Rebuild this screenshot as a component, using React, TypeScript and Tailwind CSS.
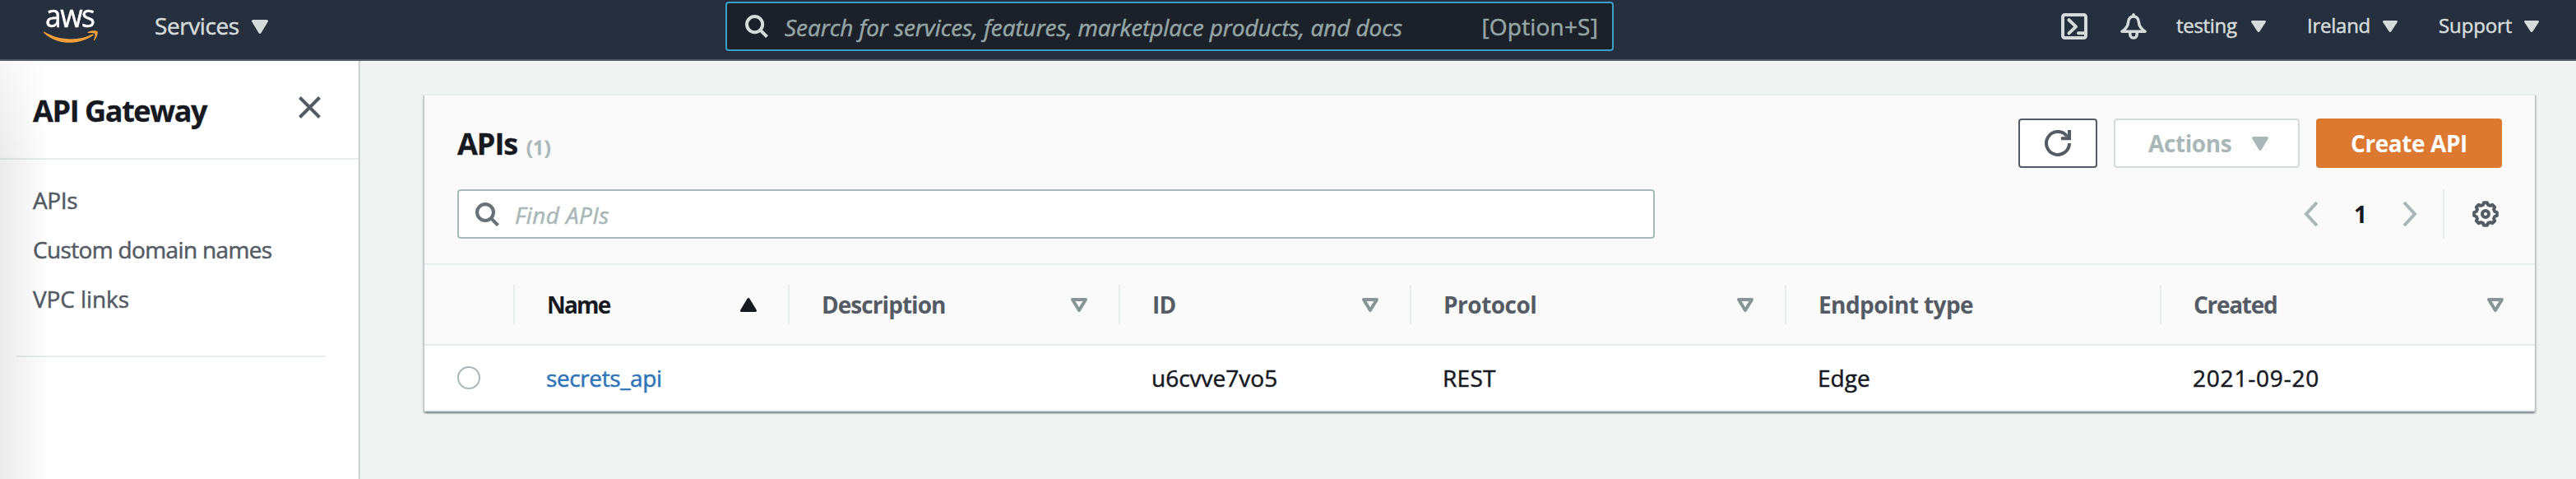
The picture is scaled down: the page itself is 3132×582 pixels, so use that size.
import type { ReactNode } from "react";

function Caret({ className = "" }: { className?: string }) {
  return (
    <svg viewBox="0 0 20 17" preserveAspectRatio="none" className={className} fill="currentColor">
      <path d="M1.6 0h16.8c1.3 0 2 1.4 1.3 2.5l-8.2 13.6c-.7 1.2-2.3 1.2-3 0L.3 2.5C-.4 1.4.3 0 1.6 0z" />
    </svg>
  );
}

function SearchIcon({ className = "" }: { className?: string }) {
  return (
    <svg viewBox="0 0 28 28" className={className} fill="none" stroke="currentColor" strokeWidth="4">
      <circle cx="11.6" cy="11.6" r="9.6" />
      <path d="M18 18.2 26.5 26.7" />
    </svg>
  );
}

function AwsLogo() {
  return (
    <div className="flex h-[64px] w-[66px] flex-col items-start">
      <span className="ml-[2px] h-[37px] origin-left scale-x-[0.93] text-[38px] leading-[36px] tracking-[-1.6px] text-white [-webkit-text-stroke:0.5px_white]">aws</span>
      <svg viewBox="0 0 66 16" className="h-4 w-[66px] shrink-0" fill="#f19f3b">
        <path d="M.5 1.5C18 12 42 13.5 59.5 4.6c1.2-.5 1.8.6.8 1.5C43 18.5 16 18 .3 3 -.3 2.2 0 1.2.5 1.5z" />
        <path d="M53.5 2.2C57 -.3 64.5-.2 65.5 1c1 1.5-.5 8-3.7 11-.6.5-1.1.2-.8-.5 1-2.5 2-6.5 1.3-7.5-.7-1-5-.6-8.3-.9-.7-.1-.9-.5-.5-.9z" />
      </svg>
    </div>
  );
}

function CloudShellIcon() {
  return (
    <svg viewBox="0 0 32 32" className="size-8" fill="none" stroke="currentColor" strokeWidth="4">
      <rect x="2" y="2" width="28" height="28" rx="2.5" />
      <path d="M9.5 8.2 18 16.4 9.5 24.4" strokeLinecap="round" strokeLinejoin="round" />
      <path d="M21 24.2h8" strokeLinecap="round" />
    </svg>
  );
}

function BellIcon() {
  return (
    <svg viewBox="0 0 32 32" className="size-8" fill="none" stroke="currentColor" strokeWidth="3.6" strokeLinejoin="round" strokeLinecap="round">
      <path d="M2 22.2C7.5 18.5 9.3 15.5 9.6 11c.3-4.5 3-7 6.4-7s6.1 2.5 6.4 7c.3 4.5 2.1 7.5 7.6 11.2z" />
      <path d="M16 1.8v2M11.8 23v2.4c0 6.2 8.4 6.2 8.4 0V23" />
    </svg>
  );
}

function RefreshIcon() {
  return (
    <svg viewBox="0 0 32 32" className="size-8" fill="none" stroke="currentColor" strokeWidth="4">
      <path d="M30 16A14 14 0 1 1 26.5 6.7" />
      <path d="M30 0v10.2H20" />
      <path d="M24 8.5h4.5V5z" fill="currentColor" stroke="none" />
    </svg>
  );
}

const gearPath =
  Array.from({ length: 8 }, (_, k) =>
    [
      [-8, 14],
      [8, 14],
      [15, 11.6],
      [30, 11.6],
    ]
      .map(([offset, r]) => {
        const a = ((k * 45 + offset) * Math.PI) / 180;
        return `${(16 + r * Math.sin(a)).toFixed(2)} ${(16 - r * Math.cos(a)).toFixed(2)}`;
      })
      .join("L"),
  ).reduce((d, part) => (d ? `${d}L${part}` : `M${part}`), "") + "Z";

function GearIcon() {
  return (
    <svg viewBox="0 0 32 32" className="size-8" fill="none" stroke="currentColor" strokeWidth="4" strokeLinejoin="round">
      <path d={gearPath} />
      <circle cx="16" cy="16" r="4" />
    </svg>
  );
}

function NavMenu({ label, className }: { label: string; className: string }) {
  return (
    <div className="flex items-center">
      <span className={`pb-[2px] text-[24px] leading-8 whitespace-nowrap ${className}`}>{label}</span>
      <Caret className="h-[14px] w-[18px]" />
    </div>
  );
}

function TopNav() {
  return (
    <header className="flex h-[74px] items-start border-b-2 border-[#545b64] bg-[#262f3e] text-[#d5dbdb]">
      <div className="flex h-16 w-[882px] items-center pl-[53px]">
        <AwsLogo />
        <span className="ml-[69px] w-[118px] pb-[2px] text-[28px] leading-8 tracking-[-0.43px] [-webkit-text-stroke:0.5px_currentColor]">Services</span>
        <Caret className="h-[17px] w-5" />
      </div>
      <div className="mt-[2px] flex h-[60px] w-[1080px] items-center rounded-[4px] border-2 border-[#3d9ec6] bg-[#1c2028] pr-[17px] pl-[22px] text-[28px] leading-8 text-[#95a5a6]">
        <SearchIcon className="size-7 text-[#d5dbdb]" />
        <span className="ml-[20px] pt-[2px] whitespace-nowrap tracking-[-0.08px] italic [-webkit-text-stroke:0.5px_currentColor]">
          Search for services, features, marketplace products, and docs
        </span>
        <span className="ml-auto tracking-[0.18px] [-webkit-text-stroke:0.5px_currentColor]">[Option+S]</span>
      </div>
      <div className="ml-auto flex h-16 items-center pr-[45px] [-webkit-text-stroke:0.5px_currentColor]">
        <CloudShellIcon />
        <div className="ml-[40px] mr-[36px]">
          <BellIcon />
        </div>
        <NavMenu label="testing" className="w-[91px] tracking-[-0.3px]" />
        <div className="w-[50px]" />
        <NavMenu label="Ireland" className="w-[92px] tracking-[-0.25px]" />
        <div className="w-[50px]" />
        <NavMenu label="Support" className="w-[104px] tracking-[-0.12px]" />
      </div>
    </header>
  );
}

function Sidebar() {
  return (
    <aside className="relative z-10 w-[436px] shrink-0 bg-white shadow-[0_0_2px_1px_rgba(0,28,36,0.3)] [clip-path:inset(0_-4px_0_0)]">
      <div className="flex h-[120px] items-center justify-between border-b-2 border-[#eaeded] pr-[46px] pl-[40px]">
        <h2 className="pt-[4px] text-[36px] leading-[44px] font-bold tracking-[-1.4px] text-[#16191f] [-webkit-text-stroke:0.3px_currentColor]">API Gateway</h2>
        <svg viewBox="0 0 27 27" className="mb-[6px] size-[27px] text-[#545b64]" fill="none" stroke="currentColor" strokeWidth="4">
          <path d="M1.5 1.5l24 24M25.5 1.5l-24 24" />
        </svg>
      </div>
      <nav className="flex flex-col pt-[19px] pl-[40px] text-[28px] leading-[60px] text-[#545b64] [-webkit-text-stroke:0.5px_currentColor]">
        <a className="tracking-[-0.37px]">APIs</a>
        <a className="tracking-[-0.65px]">Custom domain names</a>
        <a className="tracking-[-0.1px]">VPC links</a>
      </nav>
      <div className="mt-[39px] ml-5 h-[2px] w-[376px] bg-[#eaeded]" />
      <div className="pointer-events-none absolute inset-y-0 left-0 w-[60px] bg-linear-to-r from-black/8 to-transparent [mask-image:linear-gradient(to_bottom,rgba(0,0,0,0.4),black_120px)]" />
    </aside>
  );
}

type Sort = "asc" | "none" | null;

function HeaderCell({ children, sort, last, className = "" }: { children: ReactNode; sort: Sort; last?: boolean; className?: string }) {
  return (
    <div className={`flex h-12 items-center justify-between border-[#eaeded] pr-[38px] pl-[39px] ${last ? "" : "border-r-2"}`}>
      <span className={`pb-px whitespace-nowrap ${className}`}>{children}</span>
      {sort === "asc" && <Caret className="h-[17px] w-5 rotate-180 text-[#16191f]" />}
      {sort === "none" && (
        <svg viewBox="0 0 20 17" className="h-[17px] w-5 text-[#879596]" fill="none" stroke="currentColor" strokeWidth="4" strokeLinejoin="round">
          <path d="M2 2h16l-8 13z" />
        </svg>
      )}
    </div>
  );
}

const columns = "grid grid-cols-[110px_334px_402px_354px_456px_456px_454px] items-center";

function ApiPanel() {
  return (
    <section className="mt-[40px] ml-[80px] h-[386px] w-[2566px] border-t-2 border-[#eaeded] bg-[#fafafa] shadow-[0_2px_2px_0_rgba(0,28,36,0.35),2px_2px_2px_0_rgba(0,28,36,0.15),-2px_2px_2px_0_rgba(0,28,36,0.15)]">
      <div className="flex h-[206px] flex-col border-b-2 border-[#eaeded] pt-[28px] pr-[40px] pl-[40px]">
        <div className="flex h-[60px] items-center">
          <h1 className="w-[84px] pt-[2px] text-[36px] leading-[44px] font-bold tracking-[-1px] text-[#16191f] [-webkit-text-stroke:0.3px_currentColor]">APIs</h1>
          <span className="pt-[9px] text-[24px] leading-8 font-semibold tracking-[0.35px] text-[#aab7b8] [-webkit-text-stroke:0.8px_currentColor]">(1)</span>
          <button className="ml-auto flex h-[60px] w-24 items-center justify-center rounded-[4px] border-2 border-[#545b64] bg-white text-[#545b64]">
            <RefreshIcon />
          </button>
          <button className="ml-5 flex h-[60px] w-[226px] items-center justify-between rounded-[4px] border-2 border-[#d5dbdb] bg-white pr-[36px] pl-[40px] text-[28px] leading-8 font-bold tracking-[-0.4px] text-[#aab7b8]">
            <span className="pb-px">Actions</span>
            <Caret className="h-[17px] w-5" />
          </button>
          <button className="ml-5 h-[60px] w-[226px] rounded-[4px] bg-[#dd7831] pb-px text-[28px] leading-8 font-bold tracking-[-0.42px] text-white">
            Create API
          </button>
        </div>
        <div className="mt-[26px] flex h-[60px] items-center">
          <div className="flex h-[60px] w-[1456px] items-center rounded-[4px] border-2 border-[#aab7b8] bg-white pl-5 text-[28px] leading-8 text-[#aab7b8]">
            <SearchIcon className="size-[29px] text-[#687078]" />
            <span className="ml-[19px] pt-[2px] tracking-[0.375px] italic [-webkit-text-stroke:0.5px_currentColor]">Find APIs</span>
          </div>
          <div className="ml-auto flex items-center text-[#aab7b8]">
            <svg viewBox="0 0 18 30" className="h-[30px] w-[18px]" fill="none" stroke="currentColor" strokeWidth="4">
              <path d="M16 1 3 15l13 14" />
            </svg>
            <span className="ml-[43px] w-[59px] pb-px text-[28px] leading-8 font-bold text-[#16191f]">1</span>
            <svg viewBox="0 0 18 30" className="h-[30px] w-[18px]" fill="none" stroke="currentColor" strokeWidth="4">
              <path d="M2 1l13 14L2 29" />
            </svg>
            <div className="ml-[31px] h-[60px] w-[2px] bg-[#eaeded]" />
            <div className="mr-1 ml-[34px] text-[#545b64]">
              <GearIcon />
            </div>
          </div>
        </div>
      </div>
      <div className={`${columns} h-[98px] border-b-2 border-[#eaeded] text-[28px] leading-8 font-bold text-[#545b64]`}>
        <div className="h-12 border-r-2 border-[#eaeded]" />
        <HeaderCell sort="asc" className="tracking-[-1.8px] text-[#16191f]">Name</HeaderCell>
        <HeaderCell sort="none" className="tracking-[-0.95px]">Description</HeaderCell>
        <HeaderCell sort="none" className="tracking-[-0.8px]">ID</HeaderCell>
        <HeaderCell sort="none" className="tracking-[-0.5px]">Protocol</HeaderCell>
        <HeaderCell sort={null} className="tracking-[-0.58px]">Endpoint type</HeaderCell>
        <HeaderCell sort="none" last className="tracking-[-1.3px]">Created</HeaderCell>
      </div>
      <div className={`${columns} h-20 border-b-2 border-[#eaeded] bg-white text-[28px] leading-8 text-[#16191f] [-webkit-text-stroke:0.5px_currentColor]`}>
        <div className="pl-[40px]">
          <div className="size-7 rounded-full border-2 border-[#aab7b8] bg-white" />
        </div>
        <a className="pl-[38px] tracking-[-0.4px] text-[#2f74b9]">secrets_api</a>
        <span />
        <span className="pl-[38px]">u6cvve7vo5</span>
        <span className="pl-[38px] tracking-[0.27px]">REST</span>
        <span className="pl-[38px]">Edge</span>
        <span className="pl-[38px] tracking-[0.8px]">2021-09-20</span>
      </div>
    </section>
  );
}

export default function App() {
  return (
    <div className="flex h-[582px] w-[3132px] flex-col overflow-hidden bg-[#f2f3f3] font-['Open_Sans','Noto_Sans',sans-serif]">
      <TopNav />
      <div className="flex flex-1 items-stretch">
        <Sidebar />
        <main className="flex-1">
          <ApiPanel />
        </main>
      </div>
    </div>
  );
}
